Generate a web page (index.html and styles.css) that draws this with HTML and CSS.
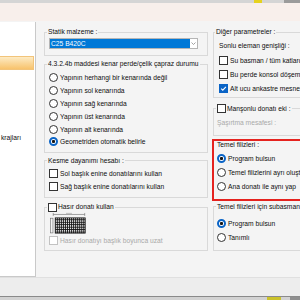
FILE: index.html
```html
<!DOCTYPE html>
<html lang="tr">
<head>
    <meta charset="UTF-8">
    <title>Perde parametreleri</title>
    <link rel="stylesheet" href="styles.css">
</head>
<body>
    <div class="topStrip"><span class="tsYellow"></span><span class="tsGray"></span></div>
    <div class="titleBand"></div>

    <div class="main">
        <div class="tree">
            <div class="treeSelected"></div>
            <div class="treeText">krajları</div>
        </div>

        <div class="form">
            <div class="col colMid">
                <fieldset class="grp gStatic">
                    <legend>Statik malzeme :</legend>
                    <div class="combo">
                        <span class="comboValue">C25 B420C</span>
                        <span class="comboArrow">
                            <svg width="7" height="9" viewBox="0 0 7 9"><path d="M1.5 3.5 L3.5 5.5 L5.5 3.5" stroke="#8a8a8a" stroke-width="0.8" fill="none"/></svg>
                        </span>
                    </div>
                </fieldset>

                <fieldset class="grp gEdge">
                    <legend>4.3.2.4b maddesi kenar perde/çelik çapraz durumu</legend>
                    <div class="opt"><span class="radio"></span>Yapının herhangi bir kenarında değil</div>
                    <div class="opt"><span class="radio"></span>Yapının sol kenarında</div>
                    <div class="opt"><span class="radio"></span>Yapının sağ kenarında</div>
                    <div class="opt"><span class="radio"></span>Yapının üst kenarında</div>
                    <div class="opt"><span class="radio"></span>Yapının alt kenarında</div>
                    <div class="opt"><span class="radio on"></span>Geometriden otomatik belirle</div>
                </fieldset>

                <fieldset class="grp gShear">
                    <legend>Kesme dayanımı hesabı :</legend>
                    <div class="opt"><span class="check"></span>Sol başlık enine donatılarını kullan</div>
                    <div class="opt"><span class="check"></span>Sağ başlık enine donatılarını kullan</div>
                </fieldset>

                <fieldset class="grp gMesh">
                    <legend class="legendCheck"><span class="check"></span>Hasır donatı kullan</legend>
                    <svg class="meshPic" width="38" height="23" viewBox="0 0 38 23">
                        <defs>
                            <pattern id="mesh" width="2" height="2.5" patternUnits="userSpaceOnUse">
                                <rect x="0" y="0" width="0.9" height="2.5" fill="#111"/>
                                <rect x="0" y="0" width="2" height="0.9" fill="#111"/>
                            </pattern>
                        </defs>
                        <line x1="4" y1="2.5" x2="36" y2="2.5" stroke="#666" stroke-width="0.6"/>
                        <line x1="4" y1="1" x2="4" y2="4" stroke="#666" stroke-width="0.6"/>
                        <line x1="36" y1="1" x2="36" y2="4" stroke="#666" stroke-width="0.6"/>
                        <line x1="17" y1="1.4" x2="23" y2="1.4" stroke="#999" stroke-width="0.6"/>
                        <rect x="1.3" y="6.3" width="2.4" height="15" fill="none" stroke="#666" stroke-width="0.6"/>
                        <rect x="6" y="6" width="30.5" height="15.5" fill="url(#mesh)"/>
                        <rect x="6" y="6" width="30.5" height="15.5" fill="none" stroke="#111" stroke-width="0.8"/>
                    </svg>
                    <div class="opt disabled"><span class="check"></span>Hasır donatıyı başlık boyunca uzat</div>
                </fieldset>
            </div>

            <div class="col colRight">
                <fieldset class="grp gOther">
                    <legend>Diğer parametreler :</legend>
                    <div class="opt label">Sonlu eleman genişliği :</div>
                    <div class="opt tall"><span class="check"></span>Su basman / tüm katlarda</div>
                    <div class="opt tall"><span class="check"></span>Bu perde konsol döşemede</div>
                    <div class="opt tall"><span class="check on">
                        <svg width="7" height="7" viewBox="0 0 7 7"><path d="M1.2 3.6 L2.8 5.2 L5.9 1.9" stroke="#fff" stroke-width="1.1" fill="none"/></svg>
                    </span>Alt ucu ankastre mesnet</div>
                </fieldset>

                <fieldset class="grp gSplice">
                    <legend class="legendCheck"><span class="check"></span>Manşonlu donatı eki :</legend>
                    <div class="opt disabled">Şaşırtma mesafesi :</div>
                </fieldset>

                <div class="redBox">
                    <fieldset class="grp gDowel">
                        <legend>Temel filizleri :</legend>
                        <div class="opt tall"><span class="radio on"></span>Program bulsun</div>
                        <div class="opt tall"><span class="radio"></span>Temel filizlerini ayrı oluştur</div>
                        <div class="opt tall"><span class="radio"></span>Ana donatı ile aynı yap</div>
                    </fieldset>
                </div>

                <fieldset class="grp gSub">
                    <legend>Temel filizleri için subasman yüksekliği :</legend>
                    <div class="opt tall"><span class="radio on"></span>Program bulsun</div>
                    <div class="opt tall"><span class="radio"></span>Tanımlı</div>
                </fieldset>
            </div>
        </div>
    </div>

    <div class="statusBar"></div>
    <div class="taskBar"><span class="tbYellow"></span><span class="tbGray"></span></div>
</body>
</html>
```

FILE: styles.css
```css
body {
    margin: 0;
    width: 300px;
    height: 300px;
    overflow: hidden;
    display: flex;
    flex-direction: column;
    background-color: #f4f4f4;
    color: #0d0d0d;
    font-family: "Liberation Sans", Arial, sans-serif;
    font-size: 6.7px;
}
.topStrip {
    display: flex;
    flex-shrink: 0;
    height: 3px;
    background-color: #d5d5d5;
}
.tsYellow {
    margin-left: 254px;
    width: 8px;
    background-color: #e6d21e;
}
.tsGray {
    margin-left: 22px;
    width: 16px;
    background-color: #9b9b9b;
}
.titleBand {
    flex-shrink: 0;
    height: 18px;
    background-color: #f8efeb;
}
.main {
    display: flex;
    flex-shrink: 0;
    height: 256px;
}
.tree {
    flex-shrink: 0;
    width: 35px;
    height: 254px;
    margin-top: 1px;
    background-color: #fff;
    border-right: 1px solid #c9c9c9;
    border-bottom: 1px solid #c9c9c9;
    overflow: hidden;
}
.treeSelected {
    margin-top: 34px;
    width: 34px;
    height: 14px;
    box-sizing: border-box;
    background: linear-gradient(#fdebc4, #f8c36c);
    border: 1px solid #f2c47a;
    border-left: none;
}
.treeText {
    margin-top: 64px;
    padding-left: 1px;
    line-height: 8px;
    white-space: nowrap;
}
.form {
    display: flex;
    flex: 1;
    gap: 5px;
    padding: 7px 0 0 8px;
    overflow: hidden;
}
.col {
    display: flex;
    flex-direction: column;
    flex-shrink: 0;
}
.colMid {
    width: 164px;
}
.colRight {
    width: 120px;
}
fieldset.grp {
    margin: 0;
    padding: 0 2px;
    min-width: 0;
    border: 1px solid #d9d9d9;
}
legend {
    padding: 0 1px;
    line-height: 8px;
    white-space: nowrap;
}
.legendCheck {
    display: flex;
    align-items: center;
    gap: 1px;
}
.opt {
    display: flex;
    align-items: center;
    gap: 2px;
    height: 12.8px;
    padding-left: 2px;
    white-space: nowrap;
}
.opt.tall {
    height: 14px;
}
.disabled {
    color: #a9a9a9;
}
.radio, .check {
    flex-shrink: 0;
    display: flex;
    align-items: center;
    justify-content: center;
    width: 9px;
    height: 9px;
    box-sizing: border-box;
    border: 1px solid #333;
    background-color: #fff;
}
.radio {
    border-radius: 50%;
}
.radio.on {
    border: 2px solid #0a64c6;
    background: radial-gradient(circle, #161616 1.3px, #fff 1.8px);
}
.check.on {
    border-color: #0a64c6;
    background-color: #0a64c6;
}
.disabled .check {
    border-color: #c2c2c2;
}

/* middle column */
.gStatic {
    padding-top: 2px !important;
    padding-bottom: 6px !important;
}
.combo {
    display: flex;
    width: 149px;
    height: 11px;
    margin-left: 2px;
    box-sizing: border-box;
    border: 1px solid #b5b5b5;
    background-color: #fff;
}
.comboValue {
    flex: 1;
    padding-left: 1px;
    line-height: 9px;
    background-color: #0078d7;
    color: #fff;
}
.comboArrow {
    display: flex;
    width: 7px;
}
.gEdge {
    margin-top: 4px !important;
    padding-top: 3.6px !important;
    padding-bottom: 3.6px !important;
}
.gShear {
    margin-top: 4px !important;
    padding-top: 2.6px !important;
    padding-bottom: 3.8px !important;
}
.gMesh {
    margin-top: 5px !important;
    padding-bottom: 2.6px !important;
}
.meshPic {
    display: block;
    height: 22.6px;
    margin-left: 2px;
}

/* right column */
.gOther {
    padding: 2px 1px 2px 1px !important;
}
.gOther .opt {
    padding-left: 4px;
}
.gOther .label {
    height: 15px;
}
.gSplice {
    margin-top: 6px !important;
    padding-top: 3.6px !important;
    padding-bottom: 5.6px !important;
}
.gSplice .opt {
    padding-left: 1px;
}
.redBox {
    margin: 3px 0 0 -1px;
    border: 2px solid #e5231f;
}
.gDowel {
    border: none !important;
    padding-top: 3px !important;
    padding-bottom: 5px !important;
}
.gDowel .opt, .gSub .opt {
    padding-left: 1px;
}
.gSub {
    margin-top: 2px !important;
    padding-top: 6px !important;
    padding-bottom: 5px !important;
}

.statusBar {
    flex-shrink: 0;
    height: 18px;
    background-color: #ededed;
    border-top: 1px solid #e0e0e0;
}
.taskBar {
    display: flex;
    flex-shrink: 0;
    height: 3px;
    border-top: 1px solid #8a8a8a;
    background-color: #d2d2d2;
}
.tbYellow {
    margin-left: 267px;
    width: 14px;
    background-color: #cbc22a;
}
.tbGray {
    margin-left: 9px;
    width: 10px;
    background-color: #8f8f8f;
}
```
